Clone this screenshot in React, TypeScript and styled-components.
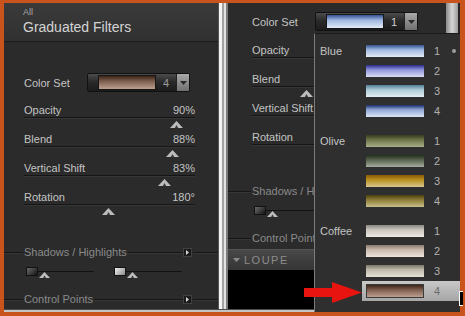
import React from 'react';
import styled, { createGlobalStyle } from 'styled-components';

type Stops = [string, string, string];

interface ColorGroup {
  name: string;
  swatches: Stops[];
}

interface SliderData {
  label: string;
  value: string;
  pct: number;
}

const colorGroups: ColorGroup[] = [
  {
    name: 'Blue',
    swatches: [
      ['#34528f', '#a0b8e2', '#e4ecf6'],
      ['#2a2c8a', '#9094da', '#dadef4'],
      ['#4e7e94', '#aecad6', '#e2eef2'],
      ['#1c2c6a', '#90a8d6', '#dae6f4'],
    ],
  },
  {
    name: 'Olive',
    swatches: [
      ['#363c1e', '#6c7448', '#aaae8a'],
      ['#222e1c', '#56624c', '#a6ac9e'],
      ['#8a5a08', '#b8901e', '#dac690'],
      ['#4a3e0c', '#8c7c38', '#cac08a'],
    ],
  },
  {
    name: 'Coffee',
    swatches: [
      ['#8a8680', '#cac6be', '#eeeae4'],
      ['#8a7a6e', '#cabaae', '#eee4dc'],
      ['#7a786a', '#bebaac', '#e6e2d6'],
      ['#3a2418', '#7e5e4e', '#bca090'],
    ],
  },
];

const leftSliders: SliderData[] = [
  { label: 'Opacity', value: '90%', pct: 90 },
  { label: 'Blend', value: '88%', pct: 88 },
  { label: 'Vertical Shift', value: '83%', pct: 83 },
  { label: 'Rotation', value: '180°', pct: 50 },
];

const rightSliders: SliderData[] = [
  { label: 'Opacity', value: '74%', pct: 74 },
  { label: 'Blend', value: '33%', pct: 33 },
  { label: 'Vertical Shift', value: '41%', pct: 41 },
  { label: 'Rotation', value: '180°', pct: 50 },
];

const gradient = (s: Stops) => `linear-gradient(${s[0]} 0%, ${s[1]} 40%, ${s[2]} 100%)`;

const GlobalStyle = createGlobalStyle`
  html, body {
    margin: 0;
    padding: 0;
    background: #c8531d;
  }
  body {
    font-family: 'Liberation Sans', Arial, sans-serif;
  }
`;

// frame + layout
const Frame = styled.div`
  width: 465px;
  height: 316px;
  box-sizing: border-box;
  padding: 3px 5px 4px 4px;
  background: #c8531d;
  display: flex;
`;

const Workspace = styled.div`
  position: relative;
  flex: 1;
  display: flex;
  flex-direction: column;
`;

const Panels = styled.div`
  flex: 1;
  display: flex;
  min-height: 0;
`;

const BottomStrip = styled.div`
  height: 2px;
  border-top: 1px solid #4c4c4c;
  background: #c4c4c4;
`;

const LeftPanel = styled.div`
  width: 214px;
  flex: none;
  background: #2b2b2b;
  display: flex;
  flex-direction: column;
`;

const Divider = styled.div`
  width: 10px;
  flex: none;
  background: linear-gradient(
    to right,
    #555 0 1px,
    #f4f4f4 1px 4px,
    #a2a2a2 4px 6px,
    #e2e2e2 6px 8px,
    #7c7c7c 8px 10px
  );
`;

const RightPanel = styled.div`
  flex: 1;
  display: flex;
  background: #2b2b2b;
`;

const RightMain = styled.div`
  flex: 1;
  display: flex;
  flex-direction: column;
`;

const ScrollColumn = styled.div`
  width: 14px;
  flex: none;
  background: #262626;
`;

const ScrollThumb = styled.div`
  width: 12px;
  height: 30px;
  background: linear-gradient(to right, #8a8a8a, #d6d6d6 50%, #9c9c9c);
`;

// header
const PanelHeader = styled.div`
  height: 39px;
  box-sizing: border-box;
  padding: 4px 0 0 19px;
  border-bottom: 1px solid #1c1c1c;
  background: linear-gradient(#3a3a3a, #313131);
`;

const Crumb = styled.div`
  font-size: 9px;
  line-height: 10px;
  color: #a8a8a8;
`;

const Title = styled.div`
  margin-top: 2px;
  font-size: 14px;
  line-height: 16px;
  color: #d4d4d4;
`;

// controls
const ControlStack = styled.div<{ $top: number }>`
  display: flex;
  flex-direction: column;
  padding-top: ${p => p.$top}px;
`;

const Inset = styled.div<{ $inset: number }>`
  padding: 0 23px 0 ${p => p.$inset}px;
`;

const ColorSetRow = styled.div<{ $after: number }>`
  display: flex;
  align-items: center;
  height: 19px;
  margin-bottom: ${p => p.$after}px;
`;

const Label = styled.span`
  width: 63px;
  font-size: 11px;
  color: #c4c4c4;
`;

const Select = styled.div`
  width: 103px;
  height: 19px;
  box-sizing: border-box;
  display: flex;
  align-items: center;
  border: 1px solid #111;
  border-radius: 2px;
  background: linear-gradient(#4c4c4c, #2a2a2a 45%, #1c1c1c);
`;

const Swatch = styled.div<{ $stops: Stops; $w?: number; $h?: number; $framed?: boolean }>`
  width: ${p => p.$w ?? 58}px;
  height: ${p => p.$h ?? 12}px;
  flex: none;
  box-sizing: border-box;
  background: ${p => gradient(p.$stops)};
  border: ${p => (p.$framed ? '1px solid #3a3a3a' : 'none')};
`;

const SelectSwatch = styled(Swatch)`
  margin-left: 10px;
  border: 1px solid #161616;
`;

const SelectValue = styled.span<{ $bright?: boolean }>`
  flex: 1;
  text-align: center;
  font-size: 11px;
  color: ${p => (p.$bright ? '#d0d0d0' : '#9c9c9c')};
`;

const SelectArrow = styled.div`
  width: 12px;
  align-self: stretch;
  display: flex;
  align-items: center;
  justify-content: center;
  background: linear-gradient(#a8a8a8, #707070);
  border-left: 1px solid #222;
`;

const SliderRow = styled.div`
  height: 29px;
`;

const SliderHead = styled.div`
  display: flex;
  justify-content: space-between;
  height: 14px;
  line-height: 14px;
  font-size: 11px;
  color: #c4c4c4;
  border-bottom: 1px solid #151515;
  box-shadow: 0 1px 0 #363636;
`;

const ThumbTrack = styled.div`
  position: relative;
  height: 14px;
`;

const Thumb = styled.svg`
  position: absolute;
  top: 3px;
  display: block;
`;

const SectionHeader = styled.div<{ $top: number }>`
  display: flex;
  align-items: center;
  height: 14px;
  margin-top: ${p => p.$top}px;
`;

const Rule = styled.div<{ $w?: number }>`
  height: 1px;
  background: #161616;
  box-shadow: 0 1px 0 #363636;
  ${p => (p.$w ? `width: ${p.$w}px; flex: none;` : 'flex: 1;')}
`;

const SectionTitle = styled.span`
  padding: 0 1px;
  font-size: 11px;
  color: #8a8a8a;
  white-space: nowrap;
`;

const ExpandButton = styled.div`
  width: 9px;
  height: 9px;
  flex: none;
  box-sizing: border-box;
  margin-right: 1px;
  display: flex;
  align-items: center;
  justify-content: center;
  background: #1a1a1a;
  border: 1px solid #404040;
`;

const ToneRow = styled.div<{ $inset: number }>`
  display: flex;
  align-items: center;
  gap: 20px;
  height: 11px;
  margin-top: 7px;
  padding-left: ${p => p.$inset + 2}px;
`;

const ToneGroup = styled.div`
  display: flex;
  align-items: center;
`;

const ToneSwatch = styled.div<{ $light?: boolean }>`
  width: 12px;
  height: 9px;
  box-sizing: border-box;
  border: 1px solid #111;
  background: ${p =>
    p.$light
      ? 'linear-gradient(135deg, #f0f0f0, #8a8a8a)'
      : 'linear-gradient(135deg, #6a6a6a, #141414)'};
`;

const MiniTrack = styled.div`
  position: relative;
  width: 56px;
  height: 1px;
  background: #121212;
`;

const MiniThumb = styled.svg`
  position: absolute;
  left: 1px;
  top: 1px;
  display: block;
`;

const LoupeBar = styled.div`
  height: 21px;
  flex: none;
  box-sizing: border-box;
  margin-top: 4px;
  padding-left: 5px;
  display: flex;
  align-items: center;
  gap: 4px;
  border-top: 1px solid #555;
  background: linear-gradient(#484848, #353535);
  font-size: 11px;
  letter-spacing: 1.5px;
  color: #8c8c8c;
`;

const Viewer = styled.div`
  flex: 1;
  background: #000;
`;

// popup list
const Popup = styled.div`
  position: absolute;
  left: 310px;
  top: 30px;
  right: 0;
  bottom: 0;
  box-sizing: border-box;
  padding: 7px 0 0 5px;
  background: #2f2f2f;
  border-left: 1px solid #7c7c7c;
  border-top: 1px solid #1a1a1a;
`;

const Group = styled.div`
  display: flex;
  margin-bottom: 10px;
`;

const GroupLabel = styled.div`
  width: 42px;
  flex: none;
  line-height: 20px;
  font-size: 11px;
  color: #c4c4c4;
`;

const Rows = styled.div`
  flex: 1;
`;

const Row = styled.div<{ $active?: boolean }>`
  display: flex;
  align-items: center;
  height: 20px;
  padding-left: 4px;
  background: ${p => (p.$active ? 'linear-gradient(#c8c8c8, #a6a6a6)' : 'transparent')};
`;

const RowNumber = styled.span<{ $active?: boolean }>`
  width: 26px;
  text-align: center;
  font-size: 11px;
  color: ${p => (p.$active ? '#6c6c6c' : '#b0b0b0')};
`;

const DotCell = styled.span<{ $on?: boolean }>`
  width: 10px;
  display: flex;
  &::after {
    content: '';
    display: ${p => (p.$on ? 'block' : 'none')};
    width: 4px;
    height: 4px;
    margin-left: 2px;
    border-radius: 50%;
    background: #9c9c9c;
  }
`;

const Pointer = styled.div`
  position: absolute;
  right: -3px;
  top: 257px;
  width: 3px;
  height: 13px;
  background: #000;
  border: 1px solid #fff;
  border-right: none;
`;

const RedArrow = styled.svg`
  position: absolute;
  left: 300px;
  top: 277px;
  display: block;
`;

const DownArrow = () => (
  <svg width="7" height="4" viewBox="0 0 7 4">
    <polygon points="0,0 7,0 3.5,4" fill="#2a2a2a" />
  </svg>
);

const SliderThumb: React.FC<{ pct: number }> = ({ pct }) => (
  <Thumb width="13" height="7" viewBox="0 0 13 7" style={{ left: `calc(${pct}% - 8px)` }}>
    <polygon points="0,7 6.5,0 13,7" fill="#bcbcbc" />
    <polygon points="4.8,7 6.5,4 8.2,7" fill="#3a3a3a" />
  </Thumb>
);

const Section: React.FC<{ title: string; inset: number; top: number }> = ({ title, inset, top }) => (
  <SectionHeader $top={top}>
    <Rule $w={inset - 1} />
    <SectionTitle>{title}</SectionTitle>
    <Rule />
    <ExpandButton>
      <svg width="3" height="5" viewBox="0 0 3 5">
        <polygon points="0,0 3,2.5 0,5" fill="#d4d4d4" />
      </svg>
    </ExpandButton>
    <Rule $w={25} />
  </SectionHeader>
);

const Tone: React.FC<{ light?: boolean }> = ({ light }) => (
  <ToneGroup>
    <ToneSwatch $light={light} />
    <MiniTrack>
      <MiniThumb width="11" height="6" viewBox="0 0 11 6">
        <polygon points="0,6 5.5,0 11,6" fill="#bcbcbc" />
        <polygon points="4,6 5.5,3.5 7,6" fill="#3a3a3a" />
      </MiniThumb>
    </MiniTrack>
  </ToneGroup>
);

interface ControlsProps {
  inset: number;
  top: number;
  afterSelect: number;
  sliders: SliderData[];
  set: number;
  stops: Stops;
  bright?: boolean;
  shadowsTop: number;
}

const FilterControls: React.FC<ControlsProps> = ({ inset, top, afterSelect, sliders, set, stops, bright, shadowsTop }) => (
  <ControlStack $top={top}>
    <Inset $inset={inset}>
      <ColorSetRow $after={afterSelect}>
        <Label>Color Set</Label>
        <Select>
          <SelectSwatch $stops={stops} $h={15} />
          <SelectValue $bright={bright}>{set}</SelectValue>
          <SelectArrow>
            <DownArrow />
          </SelectArrow>
        </Select>
      </ColorSetRow>
      {sliders.map(s => (
        <SliderRow key={s.label}>
          <SliderHead>
            <span>{s.label}</span>
            <span>{s.value}</span>
          </SliderHead>
          <ThumbTrack>
            <SliderThumb pct={s.pct} />
          </ThumbTrack>
        </SliderRow>
      ))}
    </Inset>
    <Section title="Shadows / Highlights" inset={inset} top={shadowsTop} />
    <ToneRow $inset={inset}>
      <Tone />
      <Tone light />
    </ToneRow>
    <Section title="Control Points" inset={inset} top={15} />
  </ControlStack>
);

const App: React.FC = () => {
  return (
    <>
      <GlobalStyle />
      <Frame>
        <Workspace>
          <Panels>
            <LeftPanel>
              <PanelHeader>
                <Crumb>All</Crumb>
                <Title>Graduated Filters</Title>
              </PanelHeader>
              <FilterControls
                inset={20}
                top={31}
                afterSelect={11}
                sliders={leftSliders}
                set={4}
                stops={colorGroups[2].swatches[3]}
                shadowsTop={26}
              />
            </LeftPanel>
            <Divider />
            <RightPanel>
              <RightMain>
                <FilterControls
                  inset={24}
                  top={9}
                  afterSelect={12}
                  sliders={rightSliders}
                  set={1}
                  stops={colorGroups[0].swatches[0]}
                  bright
                  shadowsTop={25}
                />
                <LoupeBar>
                  <svg width="7" height="4" viewBox="0 0 7 4">
                    <polygon points="0,0 7,0 3.5,4" fill="#8c8c8c" />
                  </svg>
                  <span>LOUPE</span>
                </LoupeBar>
                <Viewer />
              </RightMain>
              <ScrollColumn>
                <ScrollThumb />
              </ScrollColumn>
            </RightPanel>
          </Panels>
          <BottomStrip />

          <Popup>
            {colorGroups.map((g, gi) => (
              <Group key={g.name}>
                <GroupLabel>{g.name}</GroupLabel>
                <Rows>
                  {g.swatches.map((s, i) => {
                    const active = gi === 2 && i === 3;
                    return (
                      <Row key={i} $active={active}>
                        <Swatch $stops={s} $h={active ? 14 : 12} $framed={active} />
                        <RowNumber $active={active}>{i + 1}</RowNumber>
                        <DotCell $on={gi === 0 && i === 0} />
                      </Row>
                    );
                  })}
                </Rows>
              </Group>
            ))}
            <Pointer />
          </Popup>

          <RedArrow width="58" height="24" viewBox="0 0 58 24">
            <rect x="0" y="8" width="30" height="9" fill="#e8140f" />
            <polygon points="28,2 58,12.5 28,23" fill="#e8140f" />
          </RedArrow>
        </Workspace>
      </Frame>
    </>
  );
};

export default App;
